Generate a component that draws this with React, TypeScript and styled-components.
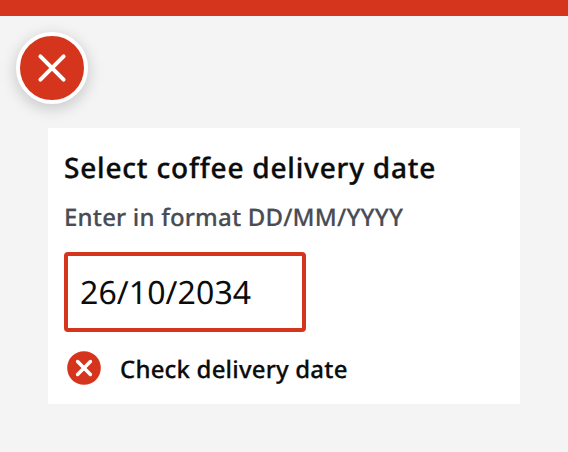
import React from "react";
import styled, { createGlobalStyle } from "styled-components";

const Global = createGlobalStyle`
  * { box-sizing: border-box; }
  body { margin: 0; background: #f4f4f4; font-family: "Noto Sans", sans-serif; color: #0b0c0c; text-rendering: geometricPrecision; }
`;
const Page = styled.main`
  height: 452px;
  overflow: hidden;
  border-top: 16px solid #d5351c;
  padding: 16px;
`;
const Badge = styled.div`
  width: 72px;
  height: 72px;
  border: 4px solid #fff;
  border-radius: 50%;
  background: #d5351c;
  box-shadow: 0 4px 16px rgba(0, 0, 0, 0.2);
  svg { display: block; width: 64px; height: 64px; }
`;
const Card = styled.section`
  width: 472px;
  height: 276px;
  margin: 24px 0 0 32px;
  padding: 16px;
  background: #fff;
`;
const Label = styled.label`
  display: block;
  font-size: 28px;
  line-height: 48px;
  font-weight: 500;
  letter-spacing: 0.8px;
  -webkit-text-stroke: 0.35px currentColor;
  white-space: nowrap;
`;
const Hint = styled.p`
  margin: 9px 0 17px;
  font-size: 24px;
  line-height: 34px;
  font-weight: 500;
  letter-spacing: 0.18px;
  -webkit-text-stroke: 0.2px currentColor;
  color: #484c54;
  white-space: nowrap;
`;
const DateInput = styled.input`
  display: block;
  width: 242px;
  height: 80px;
  padding: 0 12px;
  border: 4px solid #d5351c;
  border-radius: 4px;
  outline: none;
  background: #fff;
  color: #0b0c0c;
  font: 400 32px "Noto Sans", sans-serif;
  letter-spacing: 0.1px;
  text-rendering: geometricPrecision;
`;
const ErrorRow = styled.div`
  display: flex;
  align-items: center;
  height: 40px;
  margin-top: 16px;
  gap: 16px;
  font-size: 24px;
  font-weight: 500;
  letter-spacing: 0.18px;
  -webkit-text-stroke: 0.25px currentColor;
  white-space: nowrap;
  svg { width: 40px; height: 40px; flex: none; }
  span { padding-top: 2px; }
`;

export default function App() {
  return (
    <Page>
      <Global />
      <Badge>
        <svg viewBox="0 0 64 64"><path d="M20.4 20.4L43.6 43.6M43.6 20.4L20.4 43.6" stroke="#fff" strokeWidth="4" strokeLinecap="round" /></svg>
      </Badge>
      <Card>
        <Label htmlFor="date">Select coffee delivery date</Label>
        <Hint>Enter in format DD/MM/YYYY</Hint>
        <DateInput id="date" defaultValue="26/10/2034" />
        <ErrorRow>
          <svg viewBox="0 0 40 40"><circle cx="20" cy="20" r="16.8" fill="#d5351c" /><path d="M13.6 13.6L26.4 26.4M26.4 13.6L13.6 26.4" stroke="#fff" strokeWidth="3.5" strokeLinecap="round" /></svg>
          <span>Check delivery date</span>
        </ErrorRow>
      </Card>
    </Page>
  );
}
